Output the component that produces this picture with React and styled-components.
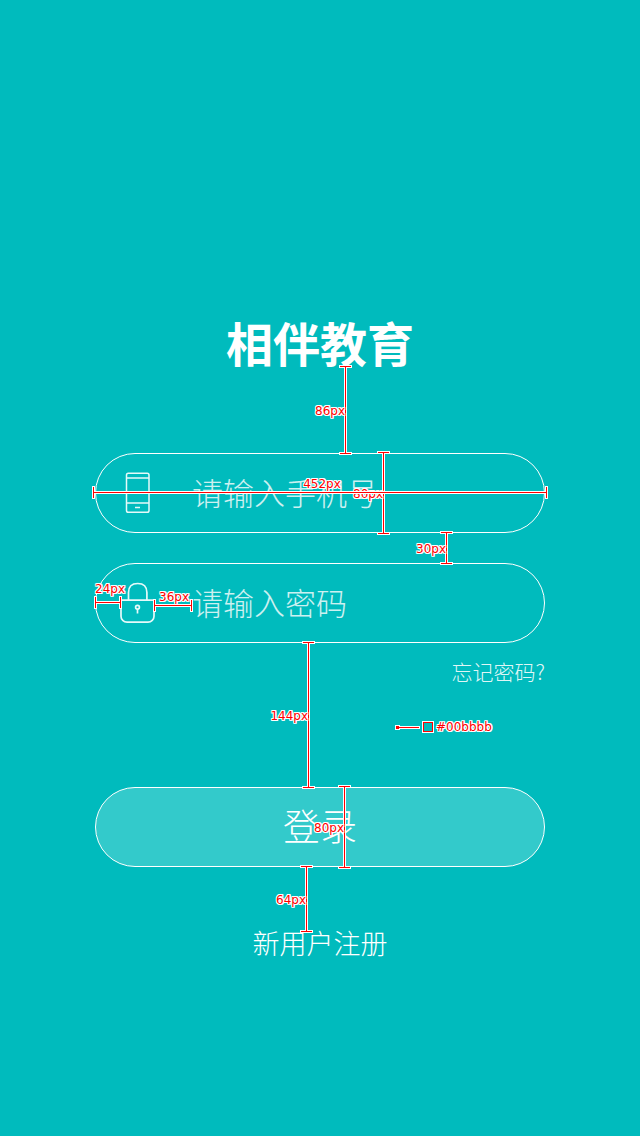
import React from 'react';
import styled, { createGlobalStyle } from 'styled-components';

const GlobalStyle = createGlobalStyle`
  * { box-sizing: border-box; }
  body {
    margin: 0;
    background: #00bbbd;
    color: #fff;
    font-family: "Noto Sans CJK SC", "Noto Sans", sans-serif;
    font-weight: 300;
  }
`;

const Page = styled.main`
  display: flex;
  flex-direction: column;
  min-height: 100vh;
  padding: 318px 95px 64px;
`;

const Block = styled.div`
  position: relative;
`;

const Title = styled.h1`
  margin: 0 0 87px;
  font-size: 47px;
  line-height: 48px;
  font-weight: 700;
  text-align: center;
`;

const Form = styled.form`
  display: flex;
  flex-direction: column;
`;

const Fields = styled.div`
  display: flex;
  flex-direction: column;
  gap: 30px;
`;

const Field = styled.label`
  display: flex;
  align-items: center;
  gap: 36px;
  height: 80px;
  padding: 0 24px;
  border: 1px solid #fff;
  border-radius: 40px;
`;

const Icon = styled.svg`
  flex: none;
  width: 36px;
  height: 42px;
  fill: none;
  stroke: #e6fafa;
`;

const Input = styled.input`
  flex: 1;
  min-width: 0;
  height: 52px;
  padding: 0 0 4px;
  border: 0;
  outline: 0;
  background: none;
  color: #fff;
  font: inherit;
  font-size: 31px;
  &::placeholder {
    color: #fff;
    opacity: 0.8;
  }
`;

const TextLink = styled.a`
  display: inline-block;
  vertical-align: top;
  color: ${({ $soft }) => ($soft ? 'rgba(255, 255, 255, 0.9)' : '#fff')};
  text-decoration: none;
  font-size: ${({ $size }) => $size}px;
`;

const ForgotRow = styled.div`
  margin: 13px 0 101px;
  line-height: 30px;
  text-align: right;
`;

const RegisterRow = styled.div`
  margin-top: 56px;
  line-height: 40px;
  text-align: center;
`;

const LoginButton = styled.button`
  display: block;
  width: 100%;
  height: 80px;
  padding: 0 0 4px;
  border: 1px solid #fff;
  border-radius: 40px;
  background: #33cacb;
  color: #fff;
  font: inherit;
  font-size: 37px;
  line-height: 48px;
`;

const red = 'linear-gradient(#f00, #f00)';
const white = 'linear-gradient(#fff, #fff)';

/* A red line with end caps, each edged in white. */
const VerticalRuler = styled.div`
  position: absolute;
  z-index: 1;
  left: ${({ $x }) => $x - 6}px;
  top: ${({ $y }) => $y - 1}px;
  width: 13px;
  height: ${({ $length }) => $length + 2}px;
  pointer-events: none;
  background:
    ${red} center / 1px calc(100% - 2px) no-repeat,
    ${red} center 1px / 11px 1px no-repeat,
    ${red} center calc(100% - 1px) / 11px 1px no-repeat,
    ${white} center / 3px 100% no-repeat,
    ${white} top / 13px 3px no-repeat,
    ${white} bottom / 13px 3px no-repeat;
`;

const HorizontalRuler = styled.div`
  position: absolute;
  z-index: 1;
  left: ${({ $start }) => $start}px;
  top: ${({ $y }) => $y - 6}px;
  width: ${({ $width }) => $width};
  height: 13px;
  pointer-events: none;
  background:
    ${red} center / calc(100% - 2px) 1px no-repeat,
    ${red} 1px center / 1px 11px no-repeat,
    ${red} calc(100% - 1px) center / 1px 11px no-repeat,
    ${white} center / 100% 3px no-repeat,
    ${white} left / 3px 13px no-repeat,
    ${white} right / 3px 13px no-repeat;
`;

const Note = styled.span`
  color: #f00;
  font: 400 12px/16px "DejaVu Sans", sans-serif;
  white-space: nowrap;
  pointer-events: none;
  text-shadow: 1px 0 #fff, -1px 0 #fff, 0 1px #fff, 0 -1px #fff,
    1px 1px #fff, -1px -1px #fff, 1px -1px #fff, -1px 1px #fff;
`;

const SideNote = styled(Note)`
  position: absolute;
  z-index: 1;
  left: ${({ $x }) => $x}px;
  top: ${({ $y }) => $y}px;
  transform: translate(-100%, -50%);
`;

const TopNote = styled(Note)`
  position: absolute;
  z-index: 1;
  left: ${({ $x }) => $x};
  top: ${({ $y }) => $y}px;
  transform: translate(-50%, -100%);
`;

const ColorNote = styled.div`
  position: absolute;
  left: 301px;
  top: 76px;
  display: flex;
  align-items: center;
  pointer-events: none;
`;

const Pointer = styled.i`
  width: 25px;
  height: 5px;
  margin: 0 3px 0 -1px;
  background:
    ${red} 1px center / 3px 3px no-repeat,
    ${red} center / 23px 1px no-repeat,
    ${white} left / 5px 5px no-repeat,
    ${white} center / 25px 3px no-repeat;
`;

const Swatch = styled.i`
  width: 10px;
  height: 10px;
  margin-right: 3px;
  border: 1px solid #f00;
  background: #00bbbb;
  box-shadow: 0 0 0 1px #fff;
`;

function VerticalMeasure({ x, y, length, label }) {
  return (
    <>
      <VerticalRuler $x={x} $y={y} $length={length} />
      <SideNote $x={x} $y={y + Math.round(length / 2) + 1}>{label}</SideNote>
    </>
  );
}

function HorizontalMeasure({ start, y, width, label, labelX, labelY }) {
  return (
    <>
      <HorizontalRuler $start={start} $y={y} $width={width} />
      <TopNote $x={labelX} $y={labelY}>{label}</TopNote>
    </>
  );
}

function PhoneIcon() {
  return (
    <Icon viewBox="0 0 36 42" strokeWidth="1.5" aria-hidden="true">
      <rect x="6.5" y="1.25" width="22.5" height="39" rx="1.8" />
      <path d="M6.5 6h22.5M6.5 31h22.5M15 35.5h5" />
    </Icon>
  );
}

function LockIcon() {
  return (
    <Icon viewBox="0 0 36 42" strokeWidth="1.7" aria-hidden="true">
      <path d="M8.5 18V10.5q0-9 9.2-9t9.2 9V18" />
      <path d="M1 18.2h33V34.2a6 6 0 0 1-6 6H7a6 6 0 0 1-6-6z" />
      <circle cx="17.5" cy="25.2" r="1.9" />
      <path d="M17.5 27v4.5" />
    </Icon>
  );
}

export default function App() {
  return (
    <>
      <GlobalStyle />
      <Page>
        <Title>相伴教育</Title>
        <Form onSubmit={(e) => e.preventDefault()}>
          <Fields>
            <Block>
              <Field>
                <PhoneIcon />
                <Input type="tel" placeholder="请输入手机号" aria-label="手机号" />
              </Field>
              <VerticalMeasure x={250} y={-87} length={88} label="86px" />
              <VerticalMeasure x={288} y={-1} length={82} label="80px" />
              <HorizontalMeasure start={-3} y={39} width="calc(100% + 6px)" label="452px" labelX="calc(50% + 2px)" labelY={39} />
              <VerticalMeasure x={351} y={79} length={32} label="30px" />
            </Block>
            <Block>
              <Field>
                <LockIcon />
                <Input type="password" placeholder="请输入密码" aria-label="密码" />
              </Field>
              <HorizontalMeasure start={-1} y={39} width="28px" label="24px" labelX="15px" labelY={34} />
              <HorizontalMeasure start={58} y={42} width="40px" label="36px" labelX="79px" labelY={42} />
              <VerticalMeasure x={213} y={79} length={146} label="144px" />
            </Block>
          </Fields>
          <Block>
            <ForgotRow>
              <TextLink href="#forgot" $size={21} $soft>忘记密码?</TextLink>
            </ForgotRow>
            <ColorNote>
              <Pointer />
              <Swatch />
              <Note>#00bbbb</Note>
            </ColorNote>
          </Block>
          <Block>
            <LoginButton type="submit">登录</LoginButton>
            <VerticalMeasure x={249} y={-1} length={82} label="80px" />
            <VerticalMeasure x={211} y={79} length={66} label="64px" />
          </Block>
        </Form>
        <RegisterRow>
          <TextLink href="#register" $size={27}>新用户注册</TextLink>
        </RegisterRow>
      </Page>
    </>
  );
}
